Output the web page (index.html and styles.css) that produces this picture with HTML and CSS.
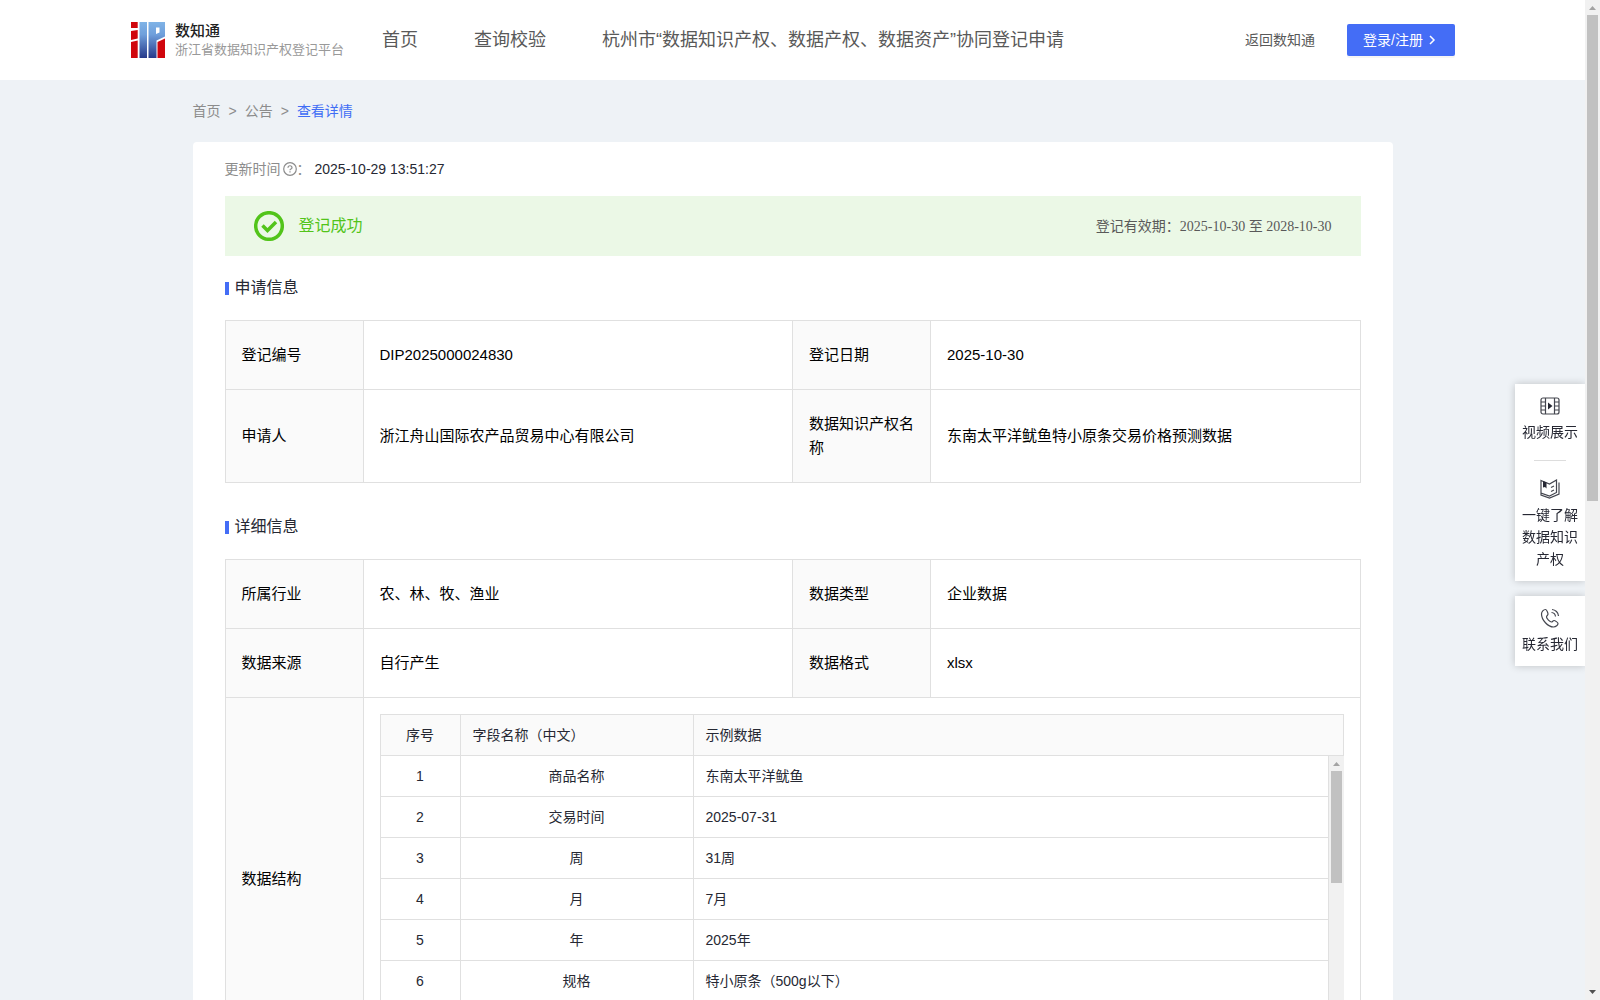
FILE: index.html
```html
<!DOCTYPE html>
<html lang="zh-CN">
<head>
<meta charset="utf-8">
<meta name="viewport" content="width=device-width, initial-scale=1">
<title>数知通</title>
<link rel="stylesheet" href="styles.css">
</head>
<body>
<div class="shell">
<div class="page">
  <header class="header">
    <a class="brand" href="#">
      <svg class="brand-mark" viewBox="0 0 34 36" aria-hidden="true">
        <defs>
          <linearGradient id="blue" gradientUnits="userSpaceOnUse" x1="0" y1="0" x2="0" y2="36">
            <stop offset="0" stop-color="#7fb3e6"/>
            <stop offset=".35" stop-color="#6f9fdb"/>
            <stop offset="1" stop-color="#26398a"/>
          </linearGradient>
        </defs>
        <path fill="#d0060d" d="M0 0h6.700v6H0zM0 9l6.700-1v8.500L0 18zM0 20l6.700-1.500V36H0z"/>
        <path fill="url(#blue)" d="M8.500 0H16v36H8.500zM17.500 0H34v14.500l-8.500 4V36h-8z"/>
        <path fill="#fff" d="M25 5.500h3.500v5L25 12z"/>
        <path fill="#d0060d" d="M26.500 20L34 16.500V36h-7.500z"/>
      </svg>
      <span class="brand-text">
        <span class="brand-name">数知通</span>
        <span class="brand-sub">浙江省数据知识产权登记平台</span>
      </span>
    </a>
    <nav class="nav">
      <a href="#">首页</a>
      <a href="#">查询校验</a>
      <a href="#">杭州市“数据知识产权、数据产权、数据资产”协同登记申请</a>
    </nav>
    <div class="actions">
      <a class="back" href="#">返回数知通</a>
      <button class="login" type="button">登录/注册
        <svg viewBox="0 0 14 14" aria-hidden="true"><path d="M5 3l4 4-4 4"/></svg>
      </button>
    </div>
  </header>

  <main class="main">
    <nav class="crumbs" aria-label="面包屑">
      <a href="#">首页</a><span>&gt;</span><a href="#">公告</a><span>&gt;</span><a class="current" href="#">查看详情</a>
    </nav>

    <article class="card">
      <p class="updated">
        <span>更新时间</span>
        <svg viewBox="0 0 14 14" aria-hidden="true"><circle cx="7" cy="7" r="6.300"/><path d="M5 5.700c0-2.600 4-2.600 4 0 0 1.400-2 1.300-2 2.500M7 9.300v1.200"/></svg>
        <span class="colon">：</span>
        <time>2025-10-29 13:51:27</time>
      </p>

      <div class="status">
        <svg viewBox="0 0 30 30" aria-hidden="true"><circle cx="15" cy="15" r="13.300"/><path d="M8.500 14.500l5 5 8.500-8.500"/></svg>
        <strong>登记成功</strong>
        <p class="validity">登记有效期：<span>2025-10-30 至 2028-10-30</span></p>
      </div>

      <section class="section">
        <h2>申请信息</h2>
        <table class="info">
          <colgroup><col class="c-label"><col><col class="c-label"><col></colgroup>
          <tr><th scope="row">登记编号</th><td>DIP2025000024830</td><th scope="row">登记日期</th><td>2025-10-30</td></tr>
          <tr><th scope="row">申请人</th><td>浙江舟山国际农产品贸易中心有限公司</td><th scope="row">数据知识产权名称</th><td>东南太平洋鱿鱼特小原条交易价格预测数据</td></tr>
        </table>
      </section>

      <section class="section">
        <h2>详细信息</h2>
        <table class="info">
          <colgroup><col class="c-label"><col><col class="c-label"><col></colgroup>
          <tr><th scope="row">所属行业</th><td>农、林、牧、渔业</td><th scope="row">数据类型</th><td>企业数据</td></tr>
          <tr><th scope="row">数据来源</th><td>自行产生</td><th scope="row">数据格式</th><td>xlsx</td></tr>
          <tr>
            <th scope="row">数据结构</th>
            <td class="nested" colspan="3">
              <div class="fields">
                <table>
                  <thead><tr><th class="f-no">序号</th><th class="f-name">字段名称（中文）</th><th>示例数据</th></tr></thead>
                </table>
                <div class="fields-body">
                  <div class="fields-rows">
                    <table>
                      <tbody>
                        <tr><td class="f-no">1</td><td class="f-name">商品名称</td><td>东南太平洋鱿鱼</td></tr>
                        <tr><td class="f-no">2</td><td class="f-name">交易时间</td><td>2025-07-31</td></tr>
                        <tr><td class="f-no">3</td><td class="f-name">周</td><td>31周</td></tr>
                        <tr><td class="f-no">4</td><td class="f-name">月</td><td>7月</td></tr>
                        <tr><td class="f-no">5</td><td class="f-name">年</td><td>2025年</td></tr>
                        <tr><td class="f-no">6</td><td class="f-name">规格</td><td>特小原条（500g以下）</td></tr>
                      </tbody>
                    </table>
                  </div>
                  <div class="scrollbar" aria-hidden="true">
                    <svg viewBox="0 0 15 15"><path fill="#a3a3a3" d="M7.500 6L11 10H4z"/></svg>
                    <div class="track"><div class="thumb" style="height: 43.600%"></div></div>
                    <svg viewBox="0 0 15 15"><path fill="#505050" d="M4 5h7L7.500 9z"/></svg>
                  </div>
                </div>
              </div>
            </td>
          </tr>
        </table>
      </section>
    </article>
  </main>
</div>
<div class="scrollbar" aria-hidden="true">
  <svg viewBox="0 0 15 15"><path fill="#a3a3a3" d="M7.500 6L11 10H4z"/></svg>
  <div class="track"><div class="thumb" style="height: 50.100%"></div></div>
  <svg viewBox="0 0 15 15"><path fill="#505050" d="M4 5h7L7.500 9z"/></svg>
</div>
</div>

<aside class="float">
  <div class="float-card">
    <a href="#">
      <svg viewBox="0 0 20 20" aria-hidden="true"><rect x="1" y="2" width="18" height="16" rx="2"/><path d="M5.500 2v16M14.500 2v16M1 6h4.500M1 10h4.500M1 14h4.500M14.500 6H19M14.500 10H19M14.500 14H19"/><path class="solid" d="M8 6.500l4.500 3.500L8 13.500z"/></svg>
      <span>视频展示</span>
    </a>
    <a href="#">
      <svg viewBox="0 0 20 20" aria-hidden="true"><path d="M1 1.500L9.500 5 16.500 1v12.500L9.500 17 1 14zM1 14v2l8.500 3 9.500-4V3.500M11 8.500l3-1.500M11 12.500l3-1.500"/><path class="solid" d="M3 2l3.500 1.500V9.500L5 8 3 8.500z"/></svg>
      <span>一键了解数据知识产权</span>
    </a>
  </div>
  <div class="float-card">
    <a href="#">
      <svg viewBox="0 0 20 20" aria-hidden="true"><path d="M5.500 1.500c-2 0-4 2-4 4.500 0 6 6.500 13 12 13 2.500 0 4.500-2 4.500-3.500 0-1-3-3-4-3s-1.500 1.500-2.500 1.500C10 14 6.500 10.500 6.500 9S8 7.500 8 6 6.500 1.500 5.500 1.500z"/><path d="M11.500 4.500a4.500 4.500 0 0 1 4 4M12 1.500a7 7 0 0 1 6.500 6.500"/></svg>
      <span>联系我们</span>
    </a>
  </div>
</aside>
</body>
</html>
```
FILE: styles.css
```css
* { box-sizing: border-box; }

body {
  margin: 0;
  background: #eef2f6;
  color: #262833;
  font: 14px/22px "Liberation Sans", "Noto Sans CJK SC", sans-serif;
}

a { color: inherit; text-decoration: none; }
p, h2 { margin: 0; font-weight: 400; }
svg { fill: none; flex: none; display: block; }

.shell { display: flex; height: 100vh; }
.page { flex: 1; min-width: 0; overflow-y: auto; scrollbar-width: none; }

/* scrollbars */
.scrollbar { display: flex; flex-direction: column; flex: none; width: 15px; background: #f1f1f1; }
.scrollbar svg { width: 15px; height: 15px; }
.scrollbar .track { flex: 1; padding: 0 2px; }
.scrollbar .thumb { background: #c1c1c1; }

/* header */
.header {
  display: flex;
  align-items: center;
  height: 80px;
  padding: 0 130px 0 131px;
  background: #fff;
  color: #595959;
}
.brand { display: flex; align-items: center; gap: 10px; width: 251px; }
.brand-mark { width: 34px; height: 36px; }
.brand-text { display: flex; flex-direction: column; white-space: nowrap; }
.brand-name { font-size: 15px; line-height: 20px; font-weight: 500; color: #222; }
.brand-sub { font-size: 13px; line-height: 18px; color: #999; }
.nav { display: flex; gap: 56px; font-size: 18px; line-height: 28px; white-space: nowrap; }
.actions { display: flex; align-items: center; gap: 32px; margin-left: auto; white-space: nowrap; }
.login {
  display: flex;
  align-items: center;
  gap: 2px;
  height: 32px;
  padding: 0 16px;
  border: 0;
  border-radius: 2px;
  background: #446df6;
  box-shadow: 0 2px 0 rgba(0, 0, 0, .04);
  color: #fff;
  font: inherit;
}
.login svg { width: 14px; height: 14px; stroke: #fff; stroke-width: 1.500; }

/* content */
.main { max-width: 1200px; margin: 0 auto; padding-bottom: 80px; }
.crumbs { display: flex; align-items: center; gap: 8px; height: 62px; color: #8c8c8c; }
.crumbs .current { color: #3f6df5; }
.card { min-height: 1774px; padding: 16px 32px; border-radius: 4px; background: #fff; }

.updated { display: flex; align-items: center; color: #8c8c8c; }
.updated svg { width: 14px; height: 14px; margin-left: 2px; stroke: currentColor; stroke-width: 1.200; }
.updated time { margin-left: 4px; color: #262833; }

.status {
  display: flex;
  align-items: center;
  gap: 15px;
  height: 60px;
  margin: 16px 0 20px;
  padding: 0 29px;
  background: #ebf8e6;
}
.status svg { width: 30px; height: 30px; stroke: #52c41a; stroke-width: 3.500; }
.status strong { font-size: 16px; font-weight: 400; color: #52c41a; }
.validity { margin-left: auto; color: #595959; }
.validity span { font-family: "Liberation Serif", "Noto Sans CJK SC", serif; }

.section { margin-bottom: 32px; }
.section h2 { display: flex; align-items: center; gap: 6px; margin-bottom: 20px; font-size: 16px; line-height: 24px; }
.section h2::before { content: ""; width: 4px; height: 13px; background: #446df6; }

table { width: 100%; border-collapse: collapse; table-layout: fixed; }
th { font-weight: 400; text-align: left; background: #fafafa; }
th, td { border: 1px solid #e0e0e0; }

.info { color: #000; font-size: 15px; line-height: 24px; }
.info .c-label { width: 138px; }
.info th, .info td { padding: 22px 16px; }
.info .nested { padding: 16px; }

.fields { color: #262833; font-size: 14px; line-height: 22px; }
.fields th, .fields td { padding: 9px 12px; }
.fields .f-no { width: 80px; text-align: center; }
.fields .f-name { width: 233px; }
.fields td.f-name { text-align: center; }
.fields-body { display: flex; height: 287px; }
.fields-rows { flex: 1; min-width: 0; overflow-y: auto; scrollbar-width: none; }
.fields-body tr:first-child td { border-top: 0; }

/* floating shortcuts */
.float {
  position: fixed;
  top: 384px;
  right: 15px;
  display: grid;
  gap: 15px;
  width: 70px;
}
.float-card { padding: 12px 7px 11px; background: #fff; box-shadow: 0 0 8px rgba(0, 0, 0, .2); clip-path: inset(-10px 0 -10px -10px); }
.float a { display: flex; flex-direction: column; align-items: center; gap: 5px; text-align: center; }
.float a + a::before { content: ""; width: 32px; height: 1px; margin: 17px 0 13px; background: #ddd; }
.float svg { width: 20px; height: 20px; stroke: #44464f; stroke-width: 1.200; }
.float .solid { fill: #262833; stroke: none; }
```
